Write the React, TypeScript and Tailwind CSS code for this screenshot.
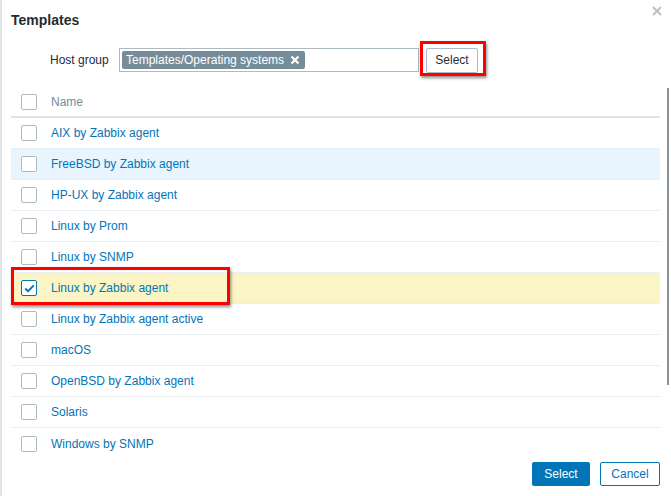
import React from "react";

const rows = [
  "AIX by Zabbix agent",
  "FreeBSD by Zabbix agent",
  "HP-UX by Zabbix agent",
  "Linux by Prom",
  "Linux by SNMP",
  "Linux by Zabbix agent",
  "Linux by Zabbix agent active",
  "macOS",
  "OpenBSD by Zabbix agent",
  "Solaris",
  "Windows by SNMP",
];

function Checkbox({ checked = false }: { checked?: boolean }) {
  return (
    <span
      className={`flex h-4 w-4 items-center justify-center rounded-[2px] border bg-white ${
        checked ? "border-[#0275b8]" : "border-[#acbbc2]"
      }`}
    >
      {checked && (
        <svg width="11" height="9" viewBox="0 0 11 9" fill="none">
          <path d="M1.2 4.6 L4 7.2 L9.8 1.4" stroke="#0275b8" strokeWidth="2" />
        </svg>
      )}
    </span>
  );
}

export default function App() {
  return (
    <div
      className="relative h-[496px] w-[671px] overflow-hidden border-l-2 border-[#dfe4e7] bg-white text-[12px] text-[#1f2c33]"
      style={{ fontFamily: '"Liberation Sans", Arial, sans-serif' }}
    >
      {/* header */}
      <div className="flex h-[38px] items-start justify-between pl-[9px] pr-[9px] pt-[11px]">
        <h4 className="text-[14px] font-bold leading-[18px]">Templates</h4>
        <svg width="10" height="10" viewBox="0 0 10 10" className="mt-[-5px]">
          <path d="M1 1 L9 9 M9 1 L1 9" stroke="#b7c3c9" strokeWidth="2" />
        </svg>
      </div>

      {/* filter */}
      <div className="flex h-[44px] items-center pl-[48px]">
        <span className="w-[69px] leading-[14px]">Host group</span>
        <div className="flex h-[24px] w-[300px] items-center border border-[#acbbc2] pl-[2px]">
          <span className="flex h-[18px] items-center gap-[6px] rounded-[2px] bg-[#768d99] pl-[4px] pr-[5px] text-white">
            Templates/Operating systems
            <svg width="10" height="10" viewBox="0 0 10 10">
              <path d="M1.5 1.5 L8.5 8.5 M8.5 1.5 L1.5 8.5" stroke="#fff" strokeWidth="2.2" />
            </svg>
          </span>
        </div>
        <button className="ml-[7px] h-[25px] w-[52px] rounded-[2px] border border-[#acbbc2] bg-white text-[12px] text-[#1f2c33]">
          Select
        </button>
      </div>

      {/* table */}
      <div className="ml-[9px] mt-[5px] w-[649px]">
        <div className="flex h-[31px] items-center border-b-2 border-[#dfe4e7] pl-[10px]">
          <Checkbox />
          <span className="ml-[14px] text-[#768d99]">Name</span>
        </div>
        {rows.map((name, i) => (
          <div
            key={name}
            className={`flex h-[31px] items-center border-b border-[#ebeef0] pl-[10px] ${
              i === 1 ? "bg-[#e8f5ff]" : i === 5 ? "bg-[#fbf5c5]" : ""
            } ${i === rows.length - 1 ? "border-b-0" : ""}`}
          >
            <Checkbox checked={i === 5} />
            <span className="ml-[14px] text-[#0275b8]">{name}</span>
          </div>
        ))}
      </div>

      {/* scrollbar */}
      <div className="absolute left-[665px] top-[88px] h-[297px] w-[2px] bg-[#8a959b]" />

      {/* footer */}
      <div className="mt-[3px] flex justify-end gap-[10px] pr-[11px]">
        <button className="h-[24px] w-[58px] rounded-[2px] bg-[#0275b8] text-[12px] text-white">Select</button>
        <button className="h-[24px] w-[60px] rounded-[2px] border border-[#0275b8] bg-white text-[12px] text-[#0275b8]">
          Cancel
        </button>
      </div>

      {/* annotations */}
      <div className="pointer-events-none absolute left-[418px] top-[41px] h-[35px] w-[66px] border-[3px] border-[#ff0000] shadow-[1px_2px_3px_rgba(0,0,0,0.45)]" />
      <div className="pointer-events-none absolute left-[9px] top-[267px] h-[38px] w-[219px] border-[3px] border-[#ff0000] shadow-[1px_2px_3px_rgba(0,0,0,0.45)]" />
    </div>
  );
}
